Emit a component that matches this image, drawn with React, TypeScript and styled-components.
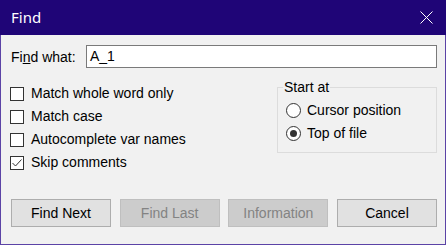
import React from "react";
import styled, { createGlobalStyle } from "styled-components";

const GlobalStyle = createGlobalStyle`
  html, body { margin: 0; padding: 0; background: #ffffff; }
  body { font-family: "Liberation Sans", Arial, sans-serif; }
  * { box-sizing: border-box; }
`;

const Window = styled.div`
  width: 446px;
  height: 245px;
  display: flex;
  flex-direction: column;
`;

const TitleBar = styled.div`
  height: 35px;
  flex: none;
  background: #1f0577;
  color: #ffffff;
  display: flex;
  align-items: center;
  justify-content: space-between;
  padding: 0 13px 0 11px;
  font-family: "Noto Sans", "Open Sans", sans-serif;
  font-size: 15px;
`;

const Title = styled.span`
  line-height: 20px;
  margin-top: -1px;
`;

const Body = styled.div`
  flex: 1;
  background: #f1f1f1;
  border: 1px solid #5b43a6;
  border-top: none;
  padding: 10px 8px 17px 9px;
  display: flex;
  flex-direction: column;
  font-size: 14px;
  color: #000000;
`;

const FindRow = styled.div`
  display: flex;
  align-items: center;
  height: 23px;
`;

const FindLabel = styled.label`
  width: 76px;
  padding-left: 1px;
  line-height: 16px;
  flex: none;
`;

const TextInput = styled.div`
  flex: 1;
  height: 23px;
  background: #ffffff;
  border: 1px solid #7a7a7a;
  padding: 0 3px;
  line-height: 21px;
`;

const Main = styled.div`
  margin-top: 11px;
  display: flex;
  justify-content: space-between;
  align-items: flex-start;
`;

const CheckColumn = styled.div`
  padding-top: 6px;
  display: flex;
  flex-direction: column;
  gap: 7px;
`;

const OptionRow = styled.div`
  display: flex;
  align-items: flex-start;
  line-height: 16px;
  height: 16px;
  white-space: nowrap;
`;

const CheckBox = styled.span`
  width: 14px;
  height: 14px;
  margin-top: 2px;
  margin-right: 7px;
  background: #ffffff;
  border: 1px solid #333333;
  flex: none;
  display: flex;
  align-items: center;
  justify-content: center;
`;

const Group = styled.fieldset`
  margin: 0;
  width: 160px;
  height: 74px;
  border: 1px solid #dcdcdc;
  padding: 7px 8px 0 8px;
  display: flex;
  flex-direction: column;
  gap: 7px;
`;

const Legend = styled.legend`
  padding: 0 1px;
  margin-left: -3px;
  line-height: 16px;
`;

const Radio = styled.span<{ $checked?: boolean }>`
  width: 15px;
  height: 15px;
  margin-top: 1px;
  margin-right: 6px;
  border-radius: 50%;
  border: 1px solid #333333;
  background: #ffffff;
  flex: none;
  display: flex;
  align-items: center;
  justify-content: center;
  &::after {
    content: "";
    display: ${(p) => (p.$checked ? "block" : "none")};
    width: 7px;
    height: 7px;
    border-radius: 50%;
    background: #333333;
  }
`;

const ButtonRow = styled.div`
  margin-top: 29px;
  margin-left: 1px;
  display: flex;
  justify-content: space-between;
`;

const Button = styled.div<{ $disabled?: boolean }>`
  width: 100px;
  height: 28px;
  display: flex;
  align-items: center;
  justify-content: center;
  background: ${(p) => (p.$disabled ? "#cccccc" : "#e1e1e1")};
  border: 1px solid ${(p) => (p.$disabled ? "#bfbfbf" : "#adadad")};
  color: ${(p) => (p.$disabled ? "#838383" : "#000000")};
  font-size: 14px;
`;

const Check = () => (
  <svg width="12" height="12" viewBox="0 0 12 12">
    <path d="M1.5 6 L4.5 9 L10.5 2.5" fill="none" stroke="#333333" strokeWidth="1" />
  </svg>
);

const CloseIcon = () => (
  <svg width="13" height="13" viewBox="0 0 13 13">
    <path d="M0.5 0.5 L12.5 12.5 M12.5 0.5 L0.5 12.5" stroke="#ffffff" strokeWidth="1" fill="none" />
  </svg>
);

const options = [
  { label: "Match whole word only", checked: false },
  { label: "Match case", checked: false },
  { label: "Autocomplete var names", checked: false },
  { label: "Skip comments", checked: true },
];

export default function App() {
  return (
    <>
      <GlobalStyle />
      <Window>
        <TitleBar>
          <Title>Find</Title>
          <CloseIcon />
        </TitleBar>
        <Body>
          <FindRow>
            <FindLabel>
              Fi<u>n</u>d what:
            </FindLabel>
            <TextInput>A_1</TextInput>
          </FindRow>
          <Main>
            <CheckColumn>
              {options.map((o) => (
                <OptionRow key={o.label}>
                  <CheckBox>{o.checked && <Check />}</CheckBox>
                  {o.label}
                </OptionRow>
              ))}
            </CheckColumn>
            <Group>
              <Legend>Start at</Legend>
              <OptionRow>
                <Radio />
                Cursor position
              </OptionRow>
              <OptionRow>
                <Radio $checked />
                Top of file
              </OptionRow>
            </Group>
          </Main>
          <ButtonRow>
            <Button>Find Next</Button>
            <Button $disabled>Find Last</Button>
            <Button $disabled>Information</Button>
            <Button>Cancel</Button>
          </ButtonRow>
        </Body>
      </Window>
    </>
  );
}
